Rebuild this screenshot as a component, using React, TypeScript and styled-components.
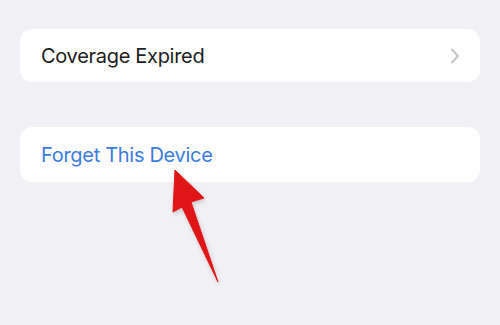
import React from "react";
import styled, { createGlobalStyle } from "styled-components";

const Global = createGlobalStyle`
  html, body { margin: 0; padding: 0; background: #f0f0f5; }
  body { font-family: Inter, "Noto Sans", sans-serif; -webkit-font-smoothing: antialiased; }
`;

const Page = styled.div`
  position: relative;
  width: 500px;
  height: 325px;
  box-sizing: border-box;
  padding: 29px 20px 0 20px;
  display: flex;
  flex-direction: column;
  gap: 45px;
  background: #f0f0f5;
  overflow: hidden;
`;

const Card = styled.div<{ $h: number }>`
  height: ${(p) => p.$h}px;
  background: #ffffff;
  border-radius: 12px;
  display: flex;
  align-items: center;
  justify-content: space-between;
  padding: 0 20px 0 21px;
`;

const Label = styled.span<{ $blue?: boolean }>`
  font-size: 20px;
  letter-spacing: -0.3px;
  color: ${(p) => (p.$blue ? "#3b7ce0" : "#1c1c1e")};
`;

const Chevron = () => (
  <svg width="10" height="16" viewBox="0 0 10 16">
    <path d="M2 1.5 L8 8 L2 14.5" fill="none" stroke="#c5c5c8" strokeWidth="2" strokeLinecap="round" strokeLinejoin="round" />
  </svg>
);

const ArrowLayer = styled.svg`
  position: absolute;
  left: 0;
  top: 0;
  pointer-events: none;
`;

export default function App() {
  return (
    <>
      <Global />
      <Page>
        <Card $h={53}>
          <Label>Coverage Expired</Label>
          <Chevron />
        </Card>
        <Card $h={55}>
          <Label $blue>Forget This Device</Label>
        </Card>
        <ArrowLayer width="500" height="325" viewBox="0 0 500 325">
          <defs>
            <filter id="sh" x="-20%" y="-20%" width="140%" height="140%">
              <feDropShadow dx="1" dy="2" stdDeviation="2" floodColor="#000" floodOpacity="0.18" />
            </filter>
          </defs>
          <path
            d="M175 170 L204 198 L191 202 L218 282 L182 207 L173 212 Z"
            fill="#e01414"
            stroke="#e01414"
            strokeWidth="1"
            strokeLinejoin="round"
            filter="url(#sh)"
          />
        </ArrowLayer>
      </Page>
    </>
  );
}
